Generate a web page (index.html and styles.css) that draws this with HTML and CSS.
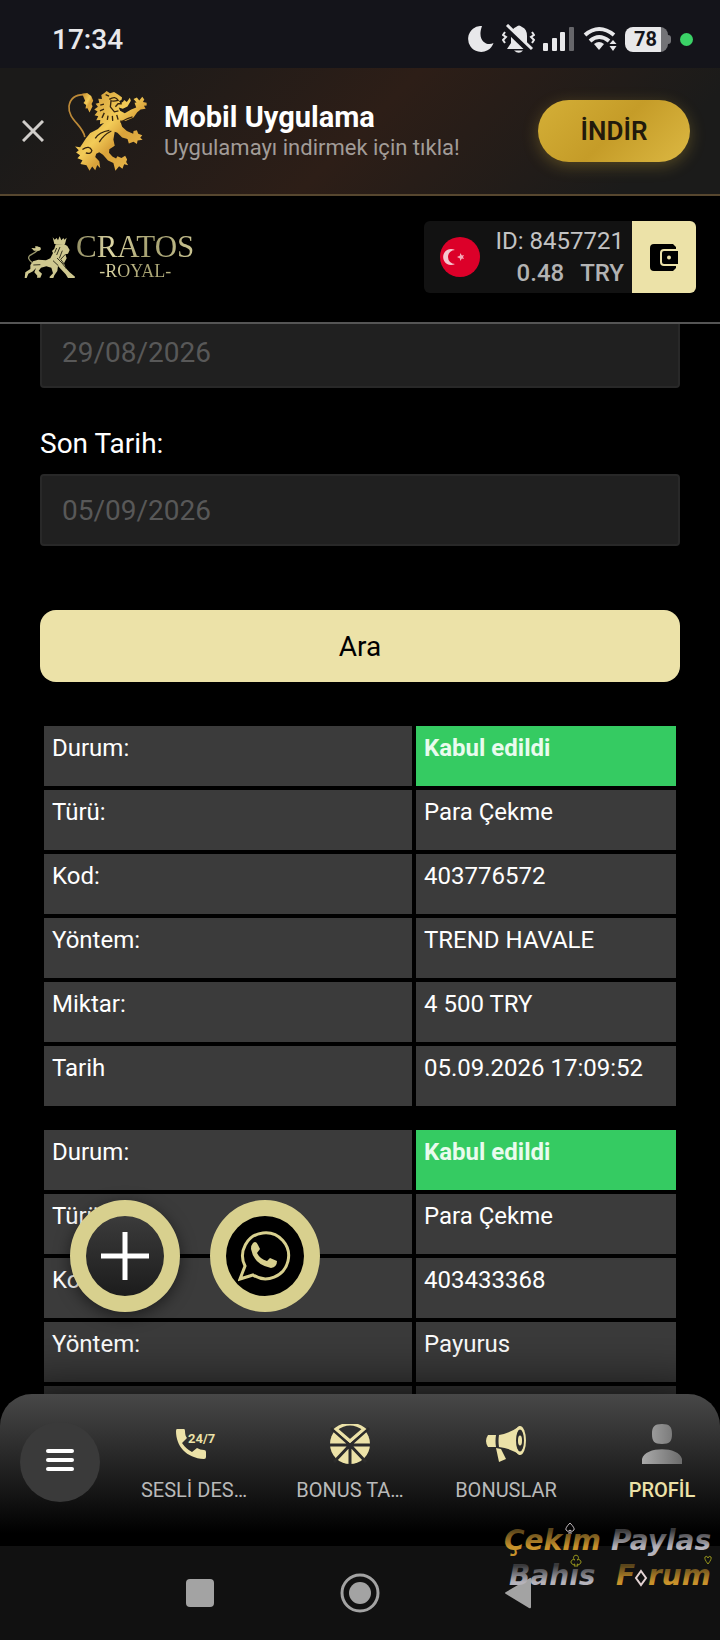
FILE: index.html
```
<!DOCTYPE html>
<html lang="tr">
<head>
  <meta charset="UTF-8" />
  <meta name="viewport" content="width=device-width, initial-scale=1" />
  <title>Cratos Royal</title>
  <link rel="stylesheet" href="styles.css">
</head>
<body>
  <div class="status-bar">
    <span class="time">17:34</span>
    <div class="status-icons">
      <svg width="26" height="26" viewBox="0 0 26 26" fill="#e8e8ea"><path d="M14 0A13 13 0 1 0 25.500 17C19 20.500 8.500 15 14 0z"/></svg>
      <svg width="33" height="30" viewBox="0 0 33 30" fill="#e8e8ea">
        <path d="M5 25L9 19V11Q10 4 14 3Q17 0 20 3Q25 5 25 12V19L29 25z"/>
        <path d="M12 26.500H21Q17 31 12 26.500z"/>
        <path d="M3 8L1 11L4 13L1 16L3 19M30 8L32 11L29 13L32 16L30 19" fill="none" stroke="#e8e8ea" stroke-width="2"/>
        <path d="M3 3L28 27" stroke="#14141a" stroke-width="6"/>
        <path d="M5 1L30 25" stroke="#e8e8ea" stroke-width="3"/>
      </svg>
      <svg width="32" height="26" viewBox="0 0 32 26" fill="#e8e8ea">
        <rect x="0" y="17" width="5" height="8" rx="1"/><rect x="9" y="12" width="5" height="13" rx="1"/>
        <rect x="17" y="6" width="5" height="19" rx="1"/><rect x="26" y="1" width="5" height="24" rx="1" fill="#66666a"/>
      </svg>
      <svg width="34" height="26" viewBox="0 0 34 26" fill="none" stroke="#e8e8ea">
        <path d="M2 9Q16 -3 31 9" stroke-width="4"/><path d="M7 15Q16 7 26 15" stroke-width="4"/>
        <path d="M11 18Q16 14 21 18L16 24z" fill="#e8e8ea" stroke="none"/>
        <path d="M26.500 18L30 14L33.500 18zM26.500 20L30 25L33.500 20z" fill="#e8e8ea" stroke="none"/>
      </svg>
      <span class="battery">78</span>
      <span class="dot"></span>
    </div>
  </div>

  <div class="app-banner">
    <button class="close" aria-label="Kapat">
      <svg width="22" height="22" viewBox="0 0 22 22"><path d="M1 1L21 21M21 1L1 21" stroke="#d0cdca" stroke-width="3"/></svg>
    </button>
    <svg class="banner-lion" width="82" height="84" viewBox="52 28 244 248">
      <defs>
        <linearGradient id="gold" x1="0" y1="0" x2="1" y2="1">
          <stop offset="0" stop-color="#c48a2c"/><stop offset="0.450" stop-color="#f3cc58"/>
          <stop offset="0.600" stop-color="#d9a23a"/><stop offset="1" stop-color="#eebf50"/>
        </linearGradient>
      </defs>
      <path d="M105 170C100 135 54 118 58 78Q64 42 106 44" fill="none" stroke="#bd8a38" stroke-width="5"/>
      <path d="M97 41L112 39L124 48L130 62L125 72L128 78L119 97L113 84L107 85L109 75L101 69L106 62z" fill="url(#gold)"/>
      <g fill="url(#gold)">
        <path d="M162 40L170 33L180 40L192 36L205 44L216 52L214 60L207 63L211 70L219 65L222 60L230 66L239 53L242 62L232 79L218 86L206 82L210 92L224 99L243 88L258 82L253 68L259 67L250 57L260 52L267 61L276 50L282 58L278 66L289 68L289 76L281 77L286 86L271 88L261 96L250 112L226 122L210 121L216 139L230 152L249 160L250 152L260 150L264 160L276 165L270 172L277 178L262 180L260 191L250 184L236 189L232 176L216 171L202 157L194 154L190 177L194 196L178 206L177 217L187 228L198 234L202 227L214 232L225 226L231 237L228 244L234 254L222 251L217 264L207 257L196 270L190 247L174 240L159 223L148 215L139 220L136 229L148 242L151 263L142 253L136 269L127 258L119 270L110 254L92 250L98 239L83 233L91 224L79 216L87 209L76 198L91 200L98 190L108 174L121 158L144 146L162 128L150 132L151 119L139 120L145 108L134 105L143 94L133 88L144 80L137 71L148 68L145 56L156 57L154 45z"/>
      </g>
      <path d="M167 44L177 48M151 75L162 72M150 92L162 87M156 113L163 98M172 119L174 106M188 122L187 107M204 118L200 104M178 58Q196 46 204 61Q190 65 183 62L181 80L193 95L205 92M215 71L204 71L196 80M136 174Q147 155 178 150M148 185Q160 164 184 152M98 207Q119 193 126 210Q124 222 108 217M211 126Q230 114 247 110" fill="none" stroke="#35240f" stroke-width="4"/>
    </svg>
    <div class="banner-text">
      <strong>Mobil Uygulama</strong>
      <span>Uygulamayı indirmek için tıkla!</span>
    </div>
    <button class="download">İNDİR</button>
  </div>

  <header class="header">
    <a class="logo" href="#" aria-label="Cratos Royal">
      <svg width="52" height="44" viewBox="0 0 156 132" fill="#cfc890">
        <path d="M86 7L92 14L98 9L102 16L107 4L112 16L118 9L121 14L128 8L123 27H91z"/>
        <path d="M95 28L120 27L130 33L137 45L132 56L124 58L128 70L120 85L125 99L137 112L153 125L152 129H132L125 118L113 105L102 93L100 108L91 121L88 129H77V125L87 115L82 98L67 94L51 98L44 107L54 116L49 128H39L40 122L31 112L36 99L27 109L13 116L8 129H2L4 112L19 102L19 90L27 79L43 74L66 76L79 70L87 54L84 48L91 41z"/>
        <path d="M25 83Q7 70 18 61Q35 52 46 42L38 35" fill="none" stroke="#98966b" stroke-width="4"/>
        <path d="M46 47L30 47L22 39L34 40L34 33L49 37L51 43z"/>
        <path d="M98 39L92 53M108 36L98 60M115 47L106 70M124 58L110 73L121 88M99 69L114 84L128 102M87 77L103 92M28 90L49 89" fill="none" stroke="#353320" stroke-width="3"/>
      </svg>
      <span class="logo-text"><b>CRATOS</b><small>-ROYAL-</small></span>
    </a>
    <div class="account">
      <svg class="flag" width="40" height="40" viewBox="0 0 40 40">
        <circle cx="20" cy="20" r="20" fill="#dc0029"/>
        <path d="M15 13A8 8 0 1 0 15 27A7 7 0 1 1 15 13z" fill="#f5c6cf"/>
        <path d="M17 20L20 18.500L20 16L22 18.500L24 18L23 20L24 22L22 21.500L20 24L20 21.500z" fill="#f3a8b7"/>
      </svg>
      <div class="account-info">
        <span>ID: 8457721</span>
        <span class="balance"><b>0.48</b><b>TRY</b></span>
      </div>
      <button class="wallet" aria-label="Cüzdan">
        <svg width="28" height="27" viewBox="0 0 28 27">
          <path d="M4 0H23L26 3V5H14Q10 5 10 9V18Q10 22 14 22H26V24L23 27H4Q0 27 0 23V4Q0 0 4 0z"/>
          <path d="M14 7H28V20H14Q12 20 12 18V9Q12 7 14 7z"/><circle cx="19" cy="13.500" r="2" fill="#ece2a8"/>
        </svg>
      </button>
    </div>
  </header>

  <main class="content">
    <form class="filter">
      <input class="date" type="text" value="29/08/2026" aria-label="29/08/2026" disabled>
      <label for="endDate">Son Tarih:</label>
      <input class="date" type="text" id="endDate" value="05/09/2026" disabled>
      <button class="search" type="button">Ara</button>
    </form>

    <table class="record">
      <tr><td>Durum:</td><td class="accepted">Kabul edildi</td></tr>
      <tr><td>Türü:</td><td>Para Çekme</td></tr>
      <tr><td>Kod:</td><td>403776572</td></tr>
      <tr><td>Yöntem:</td><td>TREND HAVALE</td></tr>
      <tr><td>Miktar:</td><td>4 500 TRY</td></tr>
      <tr><td>Tarih</td><td>05.09.2026 17:09:52</td></tr>
    </table>

    <table class="record">
      <tr><td>Durum:</td><td class="accepted">Kabul edildi</td></tr>
      <tr><td>Türü:</td><td>Para Çekme</td></tr>
      <tr><td>Kod:</td><td>403433368</td></tr>
      <tr><td>Yöntem:</td><td>Payurus</td></tr>
      <tr><td></td><td></td></tr>
    </table>
  </main>

  <nav class="bottom-nav">
    <div class="floating">
      <button class="fab fab-plus" aria-label="Ekle">
        <svg width="50" height="50" viewBox="0 0 50 50"><path d="M25 1V49M1 25H49" stroke="#fff" stroke-width="5"/></svg>
      </button>
      <button class="fab fab-chat" aria-label="WhatsApp">
        <svg width="54" height="54" viewBox="2 2 54 54" fill="none" stroke="#d8d08e" stroke-width="3">
          <path d="M4 52L9 39A23 23 0 1 1 17 48z"/>
          <path d="M17 16Q20 13 22 18L24 22L21 26Q24 32 31 34L34 31L41 34Q41 40 35 41Q18 38 15 22Q15 18 17 16z" fill="#d8d08e" stroke="none"/>
        </svg>
      </button>
    </div>
    <button class="menu" aria-label="Menü"><i></i><i></i><i></i></button>
    <a class="nav-item" href="#">
      <svg width="44" height="40" viewBox="0 0 44 40" fill="#ece2a8">
        <path d="M5 5H12Q13 5 13 7Q13 12 15 14L10 19Q14 25 20 28L25 24Q28 26 32 26Q34 26 34 28V33Q34 35 32 35C14 34 4 22 4 7Q4 5 5 5z"/>
        <text class="hours" x="16" y="19">24/7</text>
      </svg>
      <span>SESLİ DES…</span>
    </a>
    <a class="nav-item" href="#">
      <svg width="40" height="40" viewBox="0 0 40 40">
        <circle cx="20" cy="20" r="20" fill="#ece2a8"/>
        <path d="M20 21H-2M20 21H42M20 21V42M20 21L4 38M20 21L36 38M20 21L1 4M20 21L39 4" stroke="#2b2b2b" stroke-width="3" fill="none"/>
        <path d="M20 17L6 5Q20 -5 34 5z" fill="#303030" stroke="#ece2a8" stroke-width="3"/>
      </svg>
      <span>BONUS TA…</span>
    </a>
    <a class="nav-item" href="#">
      <svg width="40" height="40" viewBox="0 0 40 40" fill="#ece2a8">
        <path d="M2 11H10Q9 17 10 23H2Q-2 17 2 11zM13 11Q24 9 34 2V31Q24 24 13 23Q12 17 13 11z"/>
        <path d="M10 24L15 25L20 35L13 38z"/>
        <ellipse cx="34" cy="16.500" rx="6" ry="14.500"/>
        <ellipse cx="34" cy="16.500" rx="4" ry="11" fill="#2b2b2b"/>
        <ellipse cx="34" cy="16.500" rx="2" ry="5"/>
      </svg>
      <span>BONUSLAR</span>
    </a>
    <a class="nav-item active" href="#">
      <svg width="40" height="40" viewBox="0 0 40 40">
        <defs><linearGradient id="person"><stop offset="0" stop-color="#aaa"/><stop offset="1" stop-color="#6c6c6c"/></linearGradient></defs>
        <path d="M20 0C28 0 30 3 30 10C30 17 28 20 20 20C12 20 10 17 10 10C10 3 12 0 20 0zM0 40V35C3 22 37 22 40 35V40z" fill="url(#person)"/>
      </svg>
      <span>PROFİL</span>
    </a>
  </nav>

  <div class="system-nav">
    <button aria-label="Son uygulamalar"><svg width="40" height="40" viewBox="0 0 40 40"><rect x="6" y="6" width="28" height="28" rx="4" fill="#a3a3a3"/></svg></button>
    <button aria-label="Ana ekran"><svg width="40" height="40" viewBox="0 0 40 40"><circle cx="20" cy="20" r="18" fill="none" stroke="#a3a3a3" stroke-width="3"/><circle cx="20" cy="20" r="11" fill="#a3a3a3"/></svg></button>
    <button aria-label="Geri"><svg width="40" height="40" viewBox="0 0 40 40"><path d="M30 5Q31 4 31 6V34Q31 36 29 35L6 21Q4 20 6 19z" fill="#a3a3a3"/></svg></button>
    <svg class="watermark" width="216" height="80" viewBox="0 0 216 80">
      <defs>
        <linearGradient id="wmGold" x1="0" y1="0" x2="0" y2="1"><stop offset="0.200" stop-color="#5a451b"/><stop offset="0.700" stop-color="#c8922b"/></linearGradient>
        <linearGradient id="wmSilver" x1="0" y1="0" x2="0" y2="1"><stop offset="0.200" stop-color="#39393b"/><stop offset="0.700" stop-color="#b5b3bb"/></linearGradient>
      </defs>
      <text x="0" y="40" fill="url(#wmGold)">Çekım</text>
      <text x="107" y="40" fill="url(#wmSilver)">Paylas</text>
      <text x="5" y="75" fill="url(#wmSilver)">Bahıs</text>
      <text x="112" y="75" fill="url(#wmGold)">F</text>
      <text x="144" y="75" fill="url(#wmGold)">rum</text>
      <g fill="none" stroke-width="1">
        <path d="M66 13Q61 18 62 20Q64 23 66 20Q68 23 70 20Q71 18 66 13zM66 20V23M64 23H68" stroke="#c5bdc0"/>
        <path d="M204 54Q200 49 201 47Q203 45 204 48Q205 45 207 47Q208 49 204 54z" stroke="#96951c"/>
        <path d="M71 50A2.500 2.500 0 1 1 73 50A2.500 2.500 0 1 1 73 54L74 56H70L71 54A2.500 2.500 0 1 1 71 50z" stroke="#96951c"/>
        <path d="M137 61L142 68L137 75L132 68z" stroke="#e3d3d3" stroke-width="2"/>
      </g>
    </svg>
  </div>
</body>
</html>
```
FILE: styles.css
```
* {
  box-sizing: border-box;
}
body {
  display: flex;
  flex-direction: column;
  height: 100vh;
  margin: 0;
  background: #000;
  color: #fff;
  font-family: Roboto, "Liberation Sans", sans-serif;
  overflow: hidden;
}
svg {
  display: block;
  flex: none;
}
button {
  padding: 0;
  border: none;
  background: none;
  font-family: inherit;
  cursor: pointer;
}
a {
  color: inherit;
  text-decoration: none;
}

/* status bar */
.status-bar {
  display: flex;
  align-items: center;
  justify-content: space-between;
  flex: none;
  height: 68px;
  padding: 10px 27px 0 52px;
  background: #14141a;
}
.time {
  color: #e8e8ea;
  font-size: 28px;
  font-weight: 500;
}
.status-icons {
  display: flex;
  align-items: center;
  gap: 8px;
}
.battery {
  position: relative;
  width: 43px;
  height: 25px;
  padding-right: 2px;
  border-radius: 8px;
  background: linear-gradient(90deg, #e8e8ea 36px, #737377 36px);
  color: #14141a;
  font-size: 20px;
  font-weight: 700;
  line-height: 25px;
  text-align: center;
}
.battery::after {
  content: "";
  position: absolute;
  top: 8px;
  right: -3px;
  width: 3px;
  height: 9px;
  border-radius: 0 3px 3px 0;
  background: #737377;
}
.dot {
  width: 13px;
  height: 13px;
  margin-left: 4px;
  border-radius: 50%;
  background: #3bd267;
}

/* app banner */
.app-banner {
  display: flex;
  align-items: center;
  flex: none;
  height: 128px;
  padding: 0 30px 0 22px;
  border-bottom: 2px solid #57472f;
  background: linear-gradient(135deg, #1b1a19 10%, #2d1e17 50%, #1b1b1a 88%);
}
.banner-lion {
  margin: 0 15px 0 23px;
}
.banner-text {
  flex: 1;
}
.banner-text strong,
.banner-text span {
  display: block;
}
.banner-text strong {
  font-size: 29px;
  line-height: 34px;
}
.banner-text span {
  color: #a29c98;
  font-size: 22px;
  line-height: 28px;
}
.download {
  width: 152px;
  height: 62px;
  border-radius: 31px;
  background: linear-gradient(135deg, #d4af37, #c59c28 50%, #dcb843);
  box-shadow: 0 4px 16px rgba(212, 175, 55, 0.300);
  color: #221a0b;
  font-size: 26px;
  font-weight: 600;
}

/* header */
.header {
  position: relative;
  z-index: 2;
  display: flex;
  align-items: center;
  justify-content: space-between;
  flex: none;
  height: 128px;
  padding: 0 24px 4px;
  border-bottom: 2px solid #555;
  background: #000;
}
.logo {
  display: flex;
  align-items: center;
}
.logo-text {
  background: linear-gradient(100deg, #8f8b60, #ddd6a4 30%, #a5a070 60%, #cfc996);
  background-clip: text;
  -webkit-background-clip: text;
  color: transparent;
  font-family: "Liberation Serif", serif;
  text-align: center;
}
.logo-text b,
.logo-text small {
  display: block;
  font-weight: 400;
}
.logo-text b {
  font-size: 31px;
  line-height: 28px;
}
.logo-text small {
  font-size: 18px;
  line-height: 20px;
}
.account {
  display: flex;
  align-items: center;
  height: 72px;
  border-radius: 6px;
  background: #121212;
  overflow: hidden;
}
.flag {
  margin: 0 16px;
}
.account-info {
  padding-right: 8px;
  color: #c3c3c3;
  font-size: 24px;
  line-height: 32px;
  text-align: right;
}
.account-info span {
  display: block;
}
.account-info .balance {
  display: flex;
  justify-content: flex-end;
  gap: 16px;
  color: #b3b3b3;
}
.balance b {
  font-weight: 500;
}
.wallet {
  display: flex;
  align-items: center;
  justify-content: center;
  width: 64px;
  height: 72px;
  background: #ece2a8;
}

/* history page */
.content {
  flex: 1;
  min-height: 0;
  padding: 0 40px;
  overflow: hidden;
}
.filter {
  display: flex;
  flex-direction: column;
  margin-top: -8px;
}
.filter label {
  margin: 40px 0 14px;
  font-size: 28px;
  line-height: 32px;
}
.date {
  width: 100%;
  height: 72px;
  padding: 0 20px;
  border: 2px solid #282828;
  border-radius: 4px;
  background: #202020;
  color: #585858;
  font-family: inherit;
  font-size: 28px;
}
.search {
  height: 72px;
  margin: 64px 0 40px;
  border-radius: 16px;
  background: #ece2a8;
  color: #000;
  font-size: 28px;
}
.record {
  width: 100%;
  margin-bottom: 16px;
  border-spacing: 4px;
  table-layout: fixed;
}
.record td {
  height: 60px;
  padding: 8px;
  background: #3b3b3b;
  font-size: 24px;
  line-height: 28px;
  vertical-align: top;
}
.record td:last-child {
  width: 260px;
}
.record .accepted {
  background: #35cb62;
  color: #e9fbee;
  font-weight: 700;
}

/* bottom navigation */
.bottom-nav {
  position: relative;
  display: flex;
  align-items: flex-start;
  flex: none;
  height: 152px;
  padding-left: 20px;
  border-radius: 32px 32px 0 0;
  background: linear-gradient(#484848, #000 92%);
  box-shadow: 0 -4px 56px rgba(0, 0, 0, 0.800);
}
.menu {
  display: flex;
  flex-direction: column;
  align-items: center;
  justify-content: center;
  gap: 5px;
  flex: none;
  width: 80px;
  height: 80px;
  margin: 28px 16px 0 0;
  padding-bottom: 4px;
  border-radius: 50%;
  background: #3a3a3a;
}
.menu i {
  width: 28px;
  height: 4px;
  border-radius: 2px;
  background: #fff;
}
.nav-item {
  display: flex;
  flex-direction: column;
  align-items: center;
  gap: 14px;
  flex: none;
  width: 156px;
  padding-top: 30px;
  color: #b9b9b9;
  font-size: 20px;
  line-height: 24px;
}
.nav-item.active {
  color: #ece2a8;
  font-weight: 500;
}
.hours {
  font-size: 13px;
  font-weight: 700;
}
.floating {
  position: absolute;
  bottom: 234px;
  left: 70px;
  display: flex;
  gap: 30px;
}
.fab {
  display: flex;
  align-items: center;
  justify-content: center;
  width: 110px;
  height: 112px;
  border: 16px solid #d8d08e;
  border-radius: 50%;
}
.fab-plus {
  background: linear-gradient(#3b3b3b, #1c1c1c);
  box-shadow: 0 4px 16px rgba(0, 0, 0, 0.500);
}
.fab-chat {
  background: #000;
}

/* phone buttons */
.system-nav {
  position: relative;
  display: flex;
  align-items: center;
  justify-content: center;
  gap: 120px;
  flex: none;
  height: 94px;
  background: #111;
}
.watermark {
  position: absolute;
  right: 0;
  bottom: 50px;
  font-family: "DejaVu Sans", sans-serif;
  font-size: 28px;
  font-style: italic;
  font-weight: 700;
}
```
